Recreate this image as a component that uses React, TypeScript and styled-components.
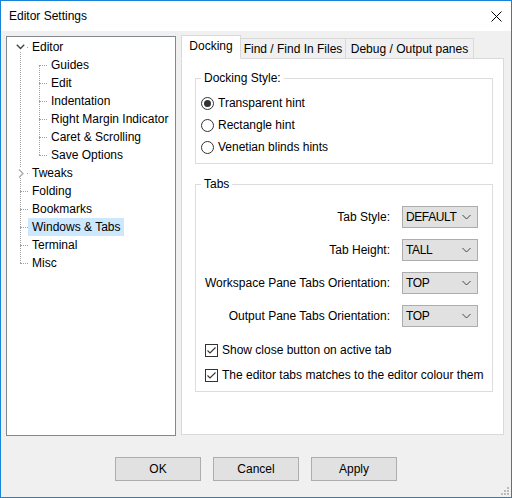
import React from "react";
import styled, { createGlobalStyle, css } from "styled-components";

const Global = createGlobalStyle`
  html, body { margin: 0; padding: 0; background: #fff; }
  body { font-family: "Liberation Sans", Arial, sans-serif; font-size: 12px; color: #000; }
  * { box-sizing: border-box; }
`;

const Window = styled.div`
  position: relative;
  width: 512px;
  height: 498px;
  border: 1px solid #1883d7;
  background: #f0f0f0;
  display: flex;
  flex-direction: column;
`;

const TitleBar = styled.div`
  height: 30px;
  background: #fff;
  display: flex;
  align-items: center;
  justify-content: space-between;
  padding: 0 9px 0 8px;
`;

const Title = styled.span`
  font-size: 12px;
  padding-bottom: 1px;
`;

const CloseButton = styled.button`
  width: 12px;
  height: 12px;
  border: 0;
  padding: 0;
  background: transparent;
  display: flex;
  align-items: center;
  justify-content: center;
`;

const Main = styled.div`
  display: flex;
  align-items: flex-start;
  gap: 5px;
  padding: 4px 7px 0 5px;
`;

const TreeBox = styled.div`
  margin-top: 1px;
  width: 170px;
  height: 400px;
  background: #fff;
  border: 1px solid #828790;
  padding-top: 1px;
  overflow: hidden;
`;

const Level = styled.div<{ $lineX: number }>`
  position: relative;
  &::before {
    content: "";
    position: absolute;
    left: ${(p) => p.$lineX}px;
    top: 9px;
    bottom: 9px;
    border-left: 1px dotted #a0a0a0;
  }
`;

const Row = styled.div<{ $lineX: number; $textX: number }>`
  position: relative;
  height: 18px;
  display: flex;
  align-items: center;
  padding-left: ${(p) => p.$textX - 4}px;
  &::before {
    content: "";
    position: absolute;
    left: ${(p) => p.$lineX}px;
    width: ${(p) => p.$textX - p.$lineX - 4}px;
    top: 9px;
    border-top: 1px dotted #a0a0a0;
  }
`;

const Label = styled.span<{ $selected?: boolean }>`
  position: relative;
  line-height: 18px;
  padding: 0 4px;
  white-space: nowrap;
  ${(p) =>
    p.$selected &&
    css`
      background: #cce8ff;
    `}
`;

const Expander = styled.span<{ $x: number }>`
  position: absolute;
  left: ${(p) => p.$x}px;
  top: 4px;
  width: 11px;
  height: 10px;
  background: #fff;
  display: flex;
  align-items: center;
  justify-content: center;
  z-index: 1;
`;

const TabControl = styled.div`
  width: 323px;
  height: 400px;
  display: flex;
  flex-direction: column;
`;

const TabStrip = styled.div`
  display: flex;
  align-items: flex-end;
  height: 24px;
  position: relative;
  z-index: 1;
  margin-bottom: -1px;
`;

const Tab = styled.div<{ $active?: boolean; $w: number }>`
  width: ${(p) => p.$w}px;
  display: flex;
  align-items: center;
  justify-content: center;
  border: 1px solid #d9d9d9;
  margin-left: -1px;
  white-space: nowrap;
  ${(p) =>
    p.$active
      ? css`
          height: 24px;
          background: #fff;
          border-bottom-color: #fff;
          margin-left: 0;
          position: relative;
          z-index: 2;
          padding-bottom: 2px;
        `
      : css`
          height: 21px;
          background: #f0f0f0;
          padding-top: 1px;
        `}
`;

const Panel = styled.div`
  flex: 1;
  background: #fff;
  border: 1px solid #d9d9d9;
  padding: 12px 10px 0 13px;
  display: flex;
  flex-direction: column;
  gap: 13px;
`;

const Group = styled.fieldset<{ $h: number }>`
  margin: 0;
  height: ${(p) => p.$h}px;
  border: 1px solid #dcdcdc;
  padding: 0;
  min-width: 0;
`;

const Legend = styled.legend`
  margin-left: 5px;
  padding: 0 3px 0 3px;
  line-height: 14px;
`;

const RadioList = styled.div`
  display: flex;
  flex-direction: column;
  gap: 4px;
  padding: 9px 0 0 5px;
`;

const ChoiceRow = styled.label`
  display: flex;
  align-items: center;
  gap: 4px;
  height: 18px;
  white-space: nowrap;
  overflow: hidden;
`;

const RadioCircle = styled.span<{ $checked?: boolean }>`
  width: 13px;
  height: 13px;
  border-radius: 50%;
  border: 1px solid #333;
  background: #fff;
  display: flex;
  align-items: center;
  justify-content: center;
  flex: none;
  &::after {
    content: "";
    width: 7px;
    height: 7px;
    border-radius: 50%;
    background: ${(p) => (p.$checked ? "#333" : "transparent")};
  }
`;

const Form = styled.div`
  display: grid;
  grid-template-columns: 1fr 76px;
  column-gap: 12px;
  row-gap: 11px;
  padding: 15px 14px 0 0;
  align-items: center;
`;

const FieldLabel = styled.span`
  text-align: right;
  white-space: nowrap;
`;

const Select = styled.div`
  position: relative;
  height: 22px;
  background: #e1e1e1;
  border: 1px solid #adadad;
  display: flex;
  align-items: center;
  padding: 0 0 0 3px;
`;

const SelectValue = styled.span`
  letter-spacing: -0.4px;
`;

const SelectArrow = styled.span`
  position: absolute;
  right: 6px;
  top: 7px;
  display: flex;
`;

const CheckList = styled.div`
  display: flex;
  flex-direction: column;
  gap: 7px;
  padding: 14px 8px 0 9px;
`;

const CheckBox = styled.span`
  width: 13px;
  height: 13px;
  border: 1px solid #333;
  background: #fff;
  flex: none;
  display: flex;
  align-items: center;
  justify-content: center;
`;

const ButtonRow = styled.div`
  display: flex;
  justify-content: center;
  gap: 12px;
  margin-top: 21px;
`;

const Button = styled.button`
  width: 86px;
  height: 24px;
  background: #e1e1e1;
  border: 1px solid #adadad;
  font-family: inherit;
  font-size: 12px;
  color: #000;
  padding: 0;
`;

const Grip = styled.svg`
  position: absolute;
  right: 2px;
  bottom: 2px;
`;

const Chevron = () => (
  <svg width="9" height="6" viewBox="0 0 9 6">
    <path d="M0.8 0.8 L4.5 4.5 L8.2 0.8" fill="none" stroke="#404040" strokeWidth="1.3" />
  </svg>
);

const SelectChevron = () => (
  <svg width="9" height="6" viewBox="0 0 9 6">
    <path d="M0.5 1 L4.5 5 L8.5 1" fill="none" stroke="#444" strokeWidth="1" />
  </svg>
);

const RightChevron = () => (
  <svg width="6" height="9" viewBox="0 0 6 9">
    <path d="M1 0.5 L5 4.5 L1 8.5" fill="none" stroke="#a6a6a6" strokeWidth="1.2" />
  </svg>
);

const Check = () => (
  <svg width="11" height="11" viewBox="0 0 11 11">
    <path d="M1.5 5.5 L4 8 L9.5 2.5" fill="none" stroke="#333" strokeWidth="1.1" />
  </svg>
);

const editorChildren = [
  "Guides",
  "Edit",
  "Indentation",
  "Right Margin Indicator",
  "Caret & Scrolling",
  "Save Options",
];

const topItems = ["Tweaks", "Folding", "Bookmarks", "Windows & Tabs", "Terminal", "Misc"];

const selects = [
  ["Tab Style:", "DEFAULT"],
  ["Tab Height:", "TALL"],
  ["Workspace Pane Tabs Orientation:", "TOP"],
  ["Output Pane Tabs Orientation:", "TOP"],
];

export default function App() {
  return (
    <>
      <Global />
      <Window>
        <TitleBar>
          <Title>Editor Settings</Title>
          <CloseButton aria-label="Close">
            <svg width="11" height="11" viewBox="0 0 11 11">
              <path d="M0.5 0.5 L10.5 10.5 M10.5 0.5 L0.5 10.5" stroke="#000" strokeWidth="1" />
            </svg>
          </CloseButton>
        </TitleBar>
        <Main>
          <TreeBox>
            <Level $lineX={13}>
              <Row $lineX={13} $textX={25}>
                <Expander $x={8}>
                  <Chevron />
                </Expander>
                <Label>Editor</Label>
              </Row>
              <Level $lineX={32}>
                {editorChildren.map((c) => (
                  <Row key={c} $lineX={32} $textX={44}>
                    <Label>{c}</Label>
                  </Row>
                ))}
              </Level>
              {topItems.map((t) => (
                <Row key={t} $lineX={13} $textX={25}>
                  {t === "Tweaks" && (
                    <Expander $x={8}>
                      <RightChevron />
                    </Expander>
                  )}
                  <Label $selected={t === "Windows & Tabs"}>{t}</Label>
                </Row>
              ))}
            </Level>
          </TreeBox>
          <TabControl>
            <TabStrip>
              <Tab $active $w={60}>Docking</Tab>
              <Tab $w={106}>Find / Find In Files</Tab>
              <Tab $w={129}>Debug / Output panes</Tab>
            </TabStrip>
            <Panel>
              <Group $h={93}>
                <Legend>Docking Style:</Legend>
                <RadioList>
                  <ChoiceRow>
                    <RadioCircle $checked />
                    Transparent hint
                  </ChoiceRow>
                  <ChoiceRow>
                    <RadioCircle />
                    Rectangle hint
                  </ChoiceRow>
                  <ChoiceRow>
                    <RadioCircle />
                    Venetian blinds hints
                  </ChoiceRow>
                </RadioList>
              </Group>
              <Group $h={215}>
                <Legend>Tabs</Legend>
                <Form>
                  {selects.map(([label, value]) => (
                    <React.Fragment key={label}>
                      <FieldLabel>{label}</FieldLabel>
                      <Select>
                        <SelectValue>{value}</SelectValue>
                        <SelectArrow>
                          <SelectChevron />
                        </SelectArrow>
                      </Select>
                    </React.Fragment>
                  ))}
                </Form>
                <CheckList>
                  <ChoiceRow>
                    <CheckBox>
                      <Check />
                    </CheckBox>
                    Show close button on active tab
                  </ChoiceRow>
                  <ChoiceRow>
                    <CheckBox>
                      <Check />
                    </CheckBox>
                    The editor tabs matches to the editor colour theme
                  </ChoiceRow>
                </CheckList>
              </Group>
            </Panel>
          </TabControl>
        </Main>
        <ButtonRow>
          <Button>OK</Button>
          <Button>Cancel</Button>
          <Button>Apply</Button>
        </ButtonRow>
        <Grip width="10" height="10" viewBox="0 0 10 10">
          {[
            [8, 0],
            [8, 3],
            [5, 3],
            [8, 6],
            [5, 6],
            [2, 6],
          ].map(([x, y]) => (
            <rect key={`${x}-${y}`} x={x} y={y + 2} width="2" height="2" fill="#bcbcbc" />
          ))}
        </Grip>
      </Window>
    </>
  );
}
